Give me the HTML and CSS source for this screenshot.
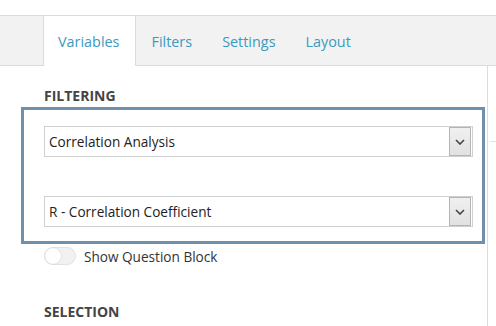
FILE: index.html
```html
<!DOCTYPE html>
<html lang="en">
<head>
    <meta charset="UTF-8">
    <meta name="viewport" content="width=device-width, initial-scale=1.0">
    <link rel="stylesheet" href="styles.css">
    <title>Variables</title>
</head>
<body>
    <div class="tabs">
        <div class="tab active">Variables</div>
        <div class="tab">Filters</div>
        <div class="tab">Settings</div>
        <div class="tab">Layout</div>
    </div>
    <div class="main">
        <div class="panel">
            <h3 class="heading">FILTERING</h3>
            <div class="filter-box">
                <div class="select">
                    <span class="value">Correlation Analysis</span>
                    <span class="arrow"><svg width="10" height="6" viewBox="0 0 10 6"><path d="M1 1l4 4 4-4" fill="none" stroke="#444" stroke-width="1.6"/></svg></span>
                </div>
                <div class="select second">
                    <span class="value">R - Correlation Coefficient</span>
                    <span class="arrow"><svg width="10" height="6" viewBox="0 0 10 6"><path d="M1 1l4 4 4-4" fill="none" stroke="#444" stroke-width="1.6"/></svg></span>
                </div>
            </div>
            <div class="toggle-row">
                <span class="toggle"><span class="knob"></span></span>
                <span class="toggle-label">Show Question Block</span>
            </div>
            <h3 class="heading selection">SELECTION</h3>
        </div>
        <div class="side"></div>
    </div>
</body>
</html>
```

FILE: styles.css
```css
body {
    margin: 0;
    padding-top: 15px;
    font-family: "Open Sans", "Liberation Sans", sans-serif;
    color: #444;
    background: #fff;
}

.tabs {
    display: flex;
    height: 49px;
    padding-left: 43px;
    background-color: #f2f2f2;
    border-top: 1px solid #dcdcdc;
    border-bottom: 1px solid #dcdcdc;
}

.tab {
    padding: 1px 15px 0;
    line-height: 49px;
    font-size: 14.4px;
    color: #3b9ac0;
}

.tab.active {
    background-color: #fff;
    border-left: 1px solid #dcdcdc;
    border-right: 1px solid #dcdcdc;
    margin-bottom: -1px;
    padding: 1px 16px 1px 14px;
}

.main {
    display: flex;
    height: 260px;
}

.panel {
    width: 466px;
    padding-left: 21px;
    border-right: 1px solid #dcdcdc;
}

.side {
    flex: 1;
    margin-top: 75px;
    height: 1px;
    margin-left: 2px;
    background-color: #e4e4e4;
}

.heading {
    margin: 20px 0 0 23px;
    font-size: 14px;
    line-height: 20px;
    font-weight: bold;
    color: #444;
}

.filter-box {
    margin-top: 1px;
    padding: 16px 9px 14px 20px;
    border: 3px solid #6f8fab;
    box-sizing: border-box;
    width: 464px;
}

.select {
    display: flex;
    align-items: center;
    height: 31px;
    border: 1px solid #d0d0d0;
    box-sizing: border-box;
    font-size: 13.6px;
    color: #222;
}

.select.second {
    margin-top: 39px;
}

.value {
    flex: 1;
    padding-left: 4px;
}

.arrow {
    display: flex;
    align-items: center;
    justify-content: center;
    width: 20px;
    height: 27px;
    margin-right: 1px;
    border: 1px solid #b4b4b4;
    background: linear-gradient(#f0f0f0, #e1e1e1);
}

.toggle-row {
    display: flex;
    align-items: center;
    margin: 3px 0 0 23px;
    height: 18px;
}

.toggle {
    display: block;
    width: 30px;
    height: 16px;
    border: 1px solid #e2e2e2;
    border-radius: 9px;
    background-color: #f1f1f1;
    position: relative;
}

.knob {
    position: absolute;
    left: 0;
    top: 0;
    width: 16px;
    height: 16px;
    border-radius: 50%;
    background-color: #fff;
    box-shadow: 0 0 1px rgba(0, 0, 0, 0.25);
}

.toggle-label {
    margin-left: 8px;
    font-size: 13.6px;
    color: #333;
}

.heading.selection {
    margin-top: 37px;
}
```
